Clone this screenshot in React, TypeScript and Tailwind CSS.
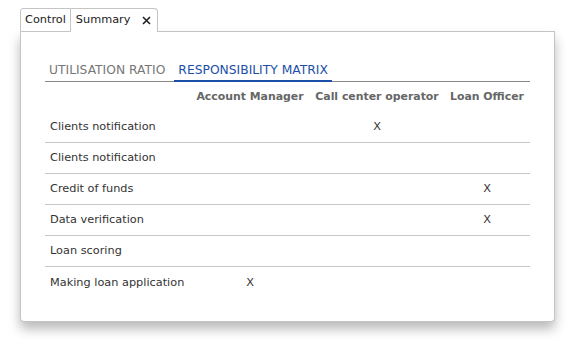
import React from 'react';

const roles = ['Account Manager', 'Call center operator', 'Loan Officer'];

const rows: { task: string; marks: number[] }[] = [
  { task: 'Clients notification', marks: [1] },
  { task: 'Clients notification', marks: [] },
  { task: 'Credit of funds', marks: [2] },
  { task: 'Data verification', marks: [2] },
  { task: 'Loan scoring', marks: [] },
  { task: 'Making loan application', marks: [0] },
];

const CloseIcon = () => (
  <svg width="9" height="9" viewBox="0 0 9 9" className="ml-[12px]">
    <path d="M1 1L8 8M8 1L1 8" stroke="#222" strokeWidth="1.6" />
  </svg>
);

export default function App() {
  return (
    <div className="w-[571px] h-[343px] bg-white pl-[20px] pt-[8px] text-[11.3px] font-['DejaVu_Sans',Verdana,sans-serif]">
      <div className="w-[535px]">
        {/* Outer tabs */}
        <div className="flex h-[24px]">
          <div className="flex items-center px-[4px] border border-[#c4c4c4] bg-white text-[#222] rounded-tl-[3px]">
            Control
          </div>
          <div className="flex items-center pl-[5px] pr-[6px] border border-l-0 border-b-0 border-[#c4c4c4] bg-white text-[#222] rounded-tr-[4px]">
            Summary
            <CloseIcon />
          </div>
          <div className="flex-1 border-b border-[#c4c4c4]" />
        </div>

        {/* Panel */}
        <div className="h-[290px] border border-t-0 border-[#c4c4c4] rounded-b-[4px] bg-white shadow-[0_7px_12px_rgba(0,0,0,0.28)] pt-[26px] px-[24px]">
          {/* Inner tabs */}
          <div className="flex border-b border-[#8a8a8a] h-[24px] text-[12.3px]">
            <div className="px-[4px] pt-[3px] text-[#777]">UTILISATION RATIO</div>
            <div className="ml-[5px] px-[4px] pt-[3px] text-[#1c4fa8] border-b-2 border-[#1c4fa8] -mb-[1px]">
              RESPONSIBILITY MATRIX
            </div>
          </div>

          {/* Matrix */}
          <div className="grid grid-cols-[145px_120px_134px_86px] h-[30px] items-center pt-[1px]">
            <div />
            {roles.map((r) => (
              <div key={r} className="text-center font-bold text-[10.9px] text-[#666] whitespace-nowrap">
                {r}
              </div>
            ))}
          </div>
          {rows.map((row, i) => (
            <div
              key={i}
              className={`grid grid-cols-[145px_120px_134px_86px] h-[31px] items-center pt-[1px] text-[#333] ${
                i < rows.length - 1 ? 'border-b border-[#c8c8c8]' : ''
              }`}
            >
              <div className="pl-[5px] whitespace-nowrap">{row.task}</div>
              {roles.map((_, c) => (
                <div key={c} className="text-center">
                  {row.marks.includes(c) ? 'X' : ''}
                </div>
              ))}
            </div>
          ))}
        </div>
      </div>
    </div>
  );
}
